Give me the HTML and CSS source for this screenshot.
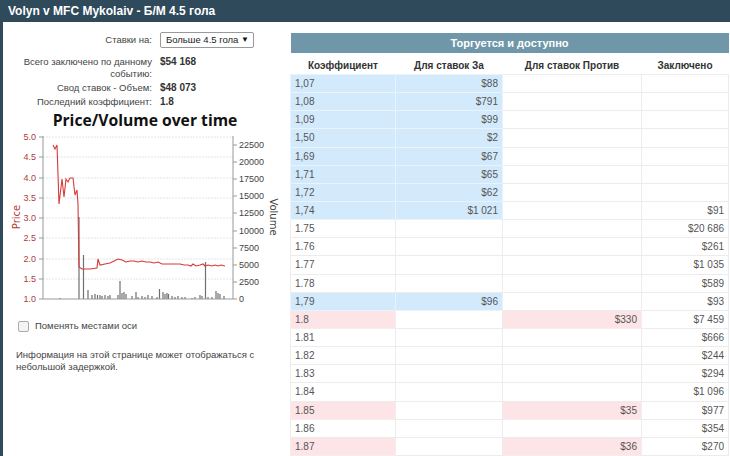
FILE: index.html
```html
<!DOCTYPE html>
<html>
<head>
<meta charset="utf-8">
<link rel="stylesheet" href="styles.css">
</head>
<body>
<div class="topbar">Volyn v MFC Mykolaiv - Б/М 4.5 гола</div>
<div class="main">
  <div class="left">
    <div class="form">
      <div class="lbl lbl-sel">Ставки на:</div>
      <div class="val"><div class="select"><span>Больше 4.5 гола</span><span class="arr">▼</span></div></div>
      <div class="lbl">Всего заключено по данному<br>событию:</div>
      <div class="val b">$54 168</div>
      <div class="lbl">Свод ставок - Объем:</div>
      <div class="val b">$48 073</div>
      <div class="lbl">Последний коэффициент:</div>
      <div class="val b">1.8</div>
    </div>
    <svg class="chart" width="282" height="197" viewBox="3 108 282 197">
      <text x="145" y="124" class="ctitle" text-anchor="middle">Price/Volume over time</text>
      <g class="grid">
        <line x1="43" y1="135" x2="233" y2="135"/>
        <line x1="43" y1="155" x2="233" y2="155"/>
        <line x1="43" y1="176" x2="233" y2="176"/>
        <line x1="43" y1="196" x2="233" y2="196"/>
        <line x1="43" y1="216" x2="233" y2="216"/>
        <line x1="43" y1="236" x2="233" y2="236"/>
        <line x1="43" y1="257" x2="233" y2="257"/>
        <line x1="43" y1="277" x2="233" y2="277"/>
      </g>
      <g class="bars">
        <line x1="60" y1="297" x2="60" y2="296"/>
        <line x1="79" y1="297" x2="79" y2="215"/>
        <line x1="83.5" y1="297" x2="83.5" y2="253"/>
        <line x1="88" y1="297" x2="88" y2="288"/>
        <line x1="92" y1="297" x2="92" y2="293"/>
        <line x1="95" y1="297" x2="95" y2="292"/>
        <line x1="97.5" y1="297" x2="97.5" y2="293"/>
        <line x1="100" y1="297" x2="100" y2="293"/>
        <line x1="102" y1="297" x2="102" y2="294"/>
        <line x1="105" y1="297" x2="105" y2="293"/>
        <line x1="108" y1="297" x2="108" y2="294"/>
        <line x1="110" y1="297" x2="110" y2="293"/>
        <line x1="118" y1="297" x2="118" y2="293"/>
        <line x1="120" y1="297" x2="120" y2="279"/>
        <line x1="122" y1="297" x2="122" y2="291"/>
        <line x1="124" y1="297" x2="124" y2="290"/>
        <line x1="126" y1="297" x2="126" y2="292"/>
        <line x1="132" y1="297" x2="132" y2="294"/>
        <line x1="136" y1="297" x2="136" y2="290"/>
        <line x1="138" y1="297" x2="138" y2="295"/>
        <line x1="142" y1="297" x2="142" y2="294"/>
        <line x1="145" y1="297" x2="145" y2="295"/>
        <line x1="148" y1="297" x2="148" y2="293"/>
        <line x1="152" y1="297" x2="152" y2="294"/>
        <line x1="157" y1="297" x2="157" y2="295"/>
        <line x1="159.5" y1="297" x2="159.5" y2="287"/>
        <line x1="163" y1="297" x2="163" y2="290"/>
        <line x1="165" y1="297" x2="165" y2="292"/>
        <line x1="167" y1="297" x2="167" y2="291"/>
        <line x1="168.5" y1="297" x2="168.5" y2="292"/>
        <line x1="172" y1="297" x2="172" y2="294"/>
        <line x1="175" y1="297" x2="175" y2="295"/>
        <line x1="178" y1="297" x2="178" y2="294"/>
        <line x1="182" y1="297" x2="182" y2="295"/>
        <line x1="185" y1="297" x2="185" y2="295"/>
        <line x1="192" y1="297" x2="192" y2="296"/>
        <line x1="195" y1="297" x2="195" y2="295"/>
        <line x1="200" y1="297" x2="200" y2="293"/>
        <line x1="202" y1="297" x2="202" y2="294"/>
        <line x1="205.5" y1="297" x2="205.5" y2="260"/>
        <line x1="208" y1="297" x2="208" y2="295"/>
        <line x1="212" y1="297" x2="212" y2="295"/>
        <line x1="216" y1="297" x2="216" y2="289"/>
        <line x1="218" y1="297" x2="218" y2="291"/>
        <line x1="220" y1="297" x2="220" y2="292"/>
        <line x1="224" y1="297" x2="224" y2="294"/>
      </g>
      <polyline class="price" points="53,143 55,147 57,143 59,202 62,177 64,195 66,177 68,180 70,176 73,176 75,193 77,188 78,202 79,265 82,267 90,267 97,266 98,257 100,263 105,262 110,261 114,259 118,257 122,258 126,260 130,259 134,259 138,260 142,259 146,260 150,260 154,261 158,260 162,262 166,262 170,262 175,262 180,262 184,263 188,263 191,264 193,262 196,264 200,263 203,262 205,264 208,263 212,264 215,263 218,264 221,263 225,264"/>
      <g class="axis">
        <line x1="43" y1="134" x2="43" y2="297"/>
        <line x1="43" y1="297" x2="233" y2="297"/>
        <line x1="233" y1="134" x2="233" y2="297"/>
        <line x1="39" y1="135" x2="43" y2="135"/>
        <line x1="39" y1="155" x2="43" y2="155"/>
        <line x1="39" y1="176" x2="43" y2="176"/>
        <line x1="39" y1="196" x2="43" y2="196"/>
        <line x1="39" y1="216" x2="43" y2="216"/>
        <line x1="39" y1="236" x2="43" y2="236"/>
        <line x1="39" y1="257" x2="43" y2="257"/>
        <line x1="39" y1="277" x2="43" y2="277"/>
        <line x1="39" y1="297" x2="43" y2="297"/>
        <line x1="233" y1="143" x2="237" y2="143"/>
        <line x1="233" y1="160" x2="237" y2="160"/>
        <line x1="233" y1="177" x2="237" y2="177"/>
        <line x1="233" y1="194" x2="237" y2="194"/>
        <line x1="233" y1="211" x2="237" y2="211"/>
        <line x1="233" y1="229" x2="237" y2="229"/>
        <line x1="233" y1="246" x2="237" y2="246"/>
        <line x1="233" y1="263" x2="237" y2="263"/>
        <line x1="233" y1="280" x2="237" y2="280"/>
        <line x1="233" y1="297" x2="237" y2="297"/>
      </g>
      <g class="ylab" text-anchor="end">
        <text x="36" y="138">5.0</text>
        <text x="36" y="158">4.5</text>
        <text x="36" y="179">4.0</text>
        <text x="36" y="199">3.5</text>
        <text x="36" y="219">3.0</text>
        <text x="36" y="239">2.5</text>
        <text x="36" y="260">2.0</text>
        <text x="36" y="280">1.5</text>
        <text x="36" y="300">1.0</text>
      </g>
      <g class="vlab">
        <text x="239" y="146">22500</text>
        <text x="239" y="163">20000</text>
        <text x="239" y="180">17500</text>
        <text x="239" y="197">15000</text>
        <text x="239" y="214">12500</text>
        <text x="239" y="232">10000</text>
        <text x="239" y="249">7500</text>
        <text x="239" y="266">5000</text>
        <text x="239" y="283">2500</text>
        <text x="239" y="300">0</text>
      </g>
      <text class="ptitle" transform="translate(20 215) rotate(-90)" text-anchor="middle">Price</text>
      <text class="vtitle" transform="translate(270 215) rotate(90)" text-anchor="middle">Volume</text>
    </svg>
    <label class="check"><span class="box"></span>Поменять местами оси</label>
    <p class="info">Информация на этой странице может отображаться с<br>небольшой задержкой.</p>
  </div>
  <div class="right">
    <table class="book">
      <colgroup><col class="c1"><col class="c2"><col class="c3"><col class="c4"></colgroup>
      <thead>
        <tr><th colspan="4" class="cap">Торгуется и доступно</th></tr>
        <tr class="hdr"><th>Коэффициент</th><th>Для ставок За</th><th>Для ставок Против</th><th>Заключено</th></tr>
      </thead>
      <tbody>
        <tr><td class="bl">1,07</td><td class="bl r">$88</td><td></td><td></td></tr>
        <tr><td class="bl">1,08</td><td class="bl r">$791</td><td></td><td></td></tr>
        <tr><td class="bl">1,09</td><td class="bl r">$99</td><td></td><td></td></tr>
        <tr><td class="bl">1,50</td><td class="bl r">$2</td><td></td><td></td></tr>
        <tr><td class="bl">1,69</td><td class="bl r">$67</td><td></td><td></td></tr>
        <tr><td class="bl">1,71</td><td class="bl r">$65</td><td></td><td></td></tr>
        <tr><td class="bl">1,72</td><td class="bl r">$62</td><td></td><td></td></tr>
        <tr><td class="bl">1,74</td><td class="bl r">$1 021</td><td></td><td class="r">$91</td></tr>
        <tr><td>1.75</td><td></td><td></td><td class="r">$20 686</td></tr>
        <tr><td>1.76</td><td></td><td></td><td class="r">$261</td></tr>
        <tr><td>1.77</td><td></td><td></td><td class="r">$1 035</td></tr>
        <tr><td>1.78</td><td></td><td></td><td class="r">$589</td></tr>
        <tr><td class="bl">1,79</td><td class="bl r">$96</td><td></td><td class="r">$93</td></tr>
        <tr><td class="pk">1.8</td><td></td><td class="pk r">$330</td><td class="r">$7 459</td></tr>
        <tr><td>1.81</td><td></td><td></td><td class="r">$666</td></tr>
        <tr><td>1.82</td><td></td><td></td><td class="r">$244</td></tr>
        <tr><td>1.83</td><td></td><td></td><td class="r">$294</td></tr>
        <tr><td>1.84</td><td></td><td></td><td class="r">$1 096</td></tr>
        <tr><td class="pk">1.85</td><td></td><td class="pk r">$35</td><td class="r">$977</td></tr>
        <tr><td>1.86</td><td></td><td></td><td class="r">$354</td></tr>
        <tr><td class="pk">1.87</td><td></td><td class="pk r">$36</td><td class="r">$270</td></tr>
      </tbody>
    </table>
  </div>
</div>
</body>
</html>
```

FILE: styles.css
```css
html, body {
  margin: 0;
  padding: 0;
  background: #fff;
  font-family: "Liberation Sans", "DejaVu Sans", sans-serif;
  font-size: 10px;
  color: #444;
  overflow: hidden;
}
.topbar {
  height: 22px;
  line-height: 22px;
  background: #2e4a5b;
  color: #fff;
  font-weight: bold;
  font-size: 12px;
  padding-left: 8px;
}
.main {
  display: flex;
  border-left: 3px solid #2e4a5b;
  height: 434px;
}
.left {
  width: 287px;
  flex: none;
  font-size: 9.5px;
}
.form {
  display: grid;
  grid-template-columns: 149px auto;
  column-gap: 8px;
  row-gap: 2px;
  padding-top: 10px;
  align-items: start;
}
.lbl {
  text-align: right;
  line-height: 12px;
  white-space: nowrap;
}
.lbl-sel {
  line-height: 16px;
  margin-bottom: 6px;
}
.val {
  line-height: 12px;
  color: #333;
  font-size: 10px;
}
.b { font-weight: bold; }
.select {
  height: 14px;
  border: 1px solid #999;
  display: flex;
  justify-content: space-between;
  align-items: center;
  padding: 0 4px 0 5px;
  width: 83px;
  color: #222;
  border-radius: 2px;
  font-size: 9.5px;
}
.arr { font-size: 8px; color: #111; }
.chart {
  display: block;
  margin-top: 2px;
}
.ctitle {
  font-family: "Open Sans", "DejaVu Sans", sans-serif;
  font-weight: bold;
  font-size: 15.7px;
  fill: #111;
}
.grid line { stroke: #e4e4e4; stroke-width: 1; stroke-dasharray: 2 1; }
.bars line { stroke: #6f6f6f; stroke-width: 1.2; }
.price { fill: none; stroke: #d63a3a; stroke-width: 1.1; }
.axis line { stroke: #999; stroke-width: 1; }
.ylab text { font-size: 9px; fill: #b03a3a; font-family: "Liberation Sans", sans-serif; }
.vlab text { font-size: 9px; fill: #444; font-family: "Liberation Sans", sans-serif; }
.ptitle { font-size: 10px; fill: #b03a3a; font-family: "DejaVu Sans", sans-serif; }
.vtitle { font-size: 10px; fill: #444; font-family: "DejaVu Sans", sans-serif; }
.check {
  display: flex;
  align-items: center;
  gap: 6px;
  margin: 13px 0 0 15px;
  line-height: 12px;
}
.box {
  width: 9px;
  height: 9px;
  border: 1px solid #aaa;
  border-radius: 2px;
  background: #f4f4f4;
}
.info {
  margin: 17px 0 0 13px;
  line-height: 12px;
  white-space: nowrap;
}
.right {
  flex: 1;
  padding-top: 11px;
}
.book {
  border-collapse: collapse;
  width: 438px;
  table-layout: fixed;
  font-size: 10px;
  color: #555;
}
.c1 { width: 105px; }
.c2 { width: 107px; }
.c3 { width: 139px; }
.c4 { width: 87px; }
.cap {
  background: #6f97a9;
  color: #fff;
  font-weight: bold;
  font-size: 11px;
  height: 20px;
  padding: 0;
}
.hdr th {
  height: 18px;
  font-weight: bold;
  font-size: 10px;
  color: #333;
  padding: 3px 0 0;
  vertical-align: middle;
}
.book td {
  height: 17.15px;
  padding: 0 4px;
  border: 1px solid #ececec;
}
.book td.r { text-align: right; }
.book td.bl { background: #d2eafb; border-color: #e9f3fb; }
.book td.pk { background: #fde4e7; border-color: #f6ecee; }
```
